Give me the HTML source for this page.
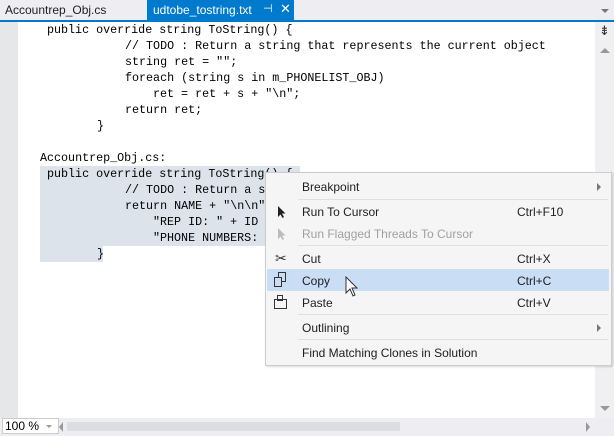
<!DOCTYPE html><html><head><style>
body{margin:0;width:614px;height:436px;overflow:hidden;background:#fff;position:relative;font-family:"Liberation Sans",sans-serif}
.a{position:absolute}
.c{position:absolute;font-family:"Liberation Mono",monospace;font-size:11.7px;color:#000;white-space:pre;line-height:16px}
.mi{position:absolute;left:302px;font-size:12px;color:#1e1e1e;line-height:14px}
.sc{position:absolute;left:517px;font-size:12px;color:#1e1e1e;line-height:14px}
.sep{position:absolute;left:298px;width:310px;height:1px;background:#e0e0e0}
</style></head><body>
<div class="a" style="left:0;top:0;width:614px;height:20px;background:#eeeef2"></div>
<div class="a" style="left:5px;top:3px;font-size:12px;color:#1e1e1e">Accountrep_Obj.cs</div>
<div class="a" style="left:147px;top:0;width:147px;height:21px;background:#007acc"></div>
<div class="a" style="left:153px;top:3px;font-size:12px;color:#fff">udtobe_tostring.txt</div>
<div class="a" style="left:263px;top:2px;font-size:11px;color:#fff">⊣</div>
<div class="a" style="left:280px;top:1px;font-size:13px;color:#fff">✕</div>
<div class="a" style="left:601px;top:9px;width:0;height:0;border-left:4px solid transparent;border-right:4px solid transparent;border-top:4px solid #777"></div>
<div class="a" style="left:0;top:20px;width:614px;height:2px;background:#007acc"></div>
<div class="a" style="left:0;top:22px;width:18px;height:396px;background:#e6e7e8"></div>
<div class="a" style="left:595px;top:22px;width:19px;height:396px;background:#f0f0f3"></div>
<div class="a" style="left:599px;top:23px;font-size:13px;color:#333">⇟</div>
<div class="a" style="left:600px;top:48px;border-left:5px solid transparent;border-right:5px solid transparent;border-bottom:5px solid #999"></div>
<div class="a" style="left:600px;top:406px;border-left:5px solid transparent;border-right:5px solid transparent;border-top:5px solid #999"></div>
<div class="a" style="left:40px;top:166px;width:260px;height:80px;background:#dde3ea"></div>
<div class="a" style="left:40px;top:246px;width:63px;height:16px;background:#dde3ea"></div>
<div class="c" style="left:47px;top:22px">public override string ToString() {</div>
<div class="c" style="left:125px;top:38px">// TODO : Return a string that represents the current object</div>
<div class="c" style="left:125px;top:54px">string ret = "";</div>
<div class="c" style="left:125px;top:70px">foreach (string s in m_PHONELIST_OBJ)</div>
<div class="c" style="left:153px;top:86px">ret = ret + s + "\n";</div>
<div class="c" style="left:125px;top:102px">return ret;</div>
<div class="c" style="left:97px;top:118px">}</div>
<div class="c" style="left:40px;top:150px">Accountrep_Obj.cs:</div>
<div class="c" style="left:47px;top:166px">public override string ToString() {</div>
<div class="c" style="left:125px;top:182px">// TODO : Return a st</div>
<div class="c" style="left:125px;top:198px">return NAME + "\n\n"</div>
<div class="c" style="left:153px;top:214px">"REP ID: " + ID +</div>
<div class="c" style="left:153px;top:230px">"PHONE NUMBERS:</div>
<div class="c" style="left:97px;top:246px">}</div>
<div class="a" style="left:0;top:418px;width:614px;height:18px;background:#eeeef2"></div>
<div class="a" style="left:2px;top:418px;width:57px;height:16px;background:#fff;border:1px solid #ccc;box-sizing:border-box"></div>
<div class="a" style="left:5px;top:419px;font-size:12px">100 %</div>
<div class="a" style="left:46px;top:425px;border-left:3px solid transparent;border-right:3px solid transparent;border-top:3px solid #999"></div>
<div class="a" style="left:59px;top:422px;border-top:5px solid transparent;border-bottom:5px solid transparent;border-right:4px solid #999"></div>
<div class="a" style="left:67px;top:422px;width:333px;height:9px;background:#dcdde2"></div>
<div class="a" style="left:586px;top:422px;border-top:5px solid transparent;border-bottom:5px solid transparent;border-left:4px solid #999"></div>
<div class="a" style="left:265px;top:172px;width:347px;height:194px;background:#f5f5f5;border:1px solid #ccc;box-sizing:border-box;box-shadow:1px 1px 2px rgba(0,0,0,.15)"></div>
<div class="a" style="left:267px;top:269px;width:342px;height:22px;background:#c9def5"></div>
<div class="mi" style="top:180px">Breakpoint</div>
<div class="a" style="left:597px;top:183px;border-top:4px solid transparent;border-bottom:4px solid transparent;border-left:4px solid #777"></div>
<div class="sep" style="top:199px"></div>
<svg class="a" style="left:277px;top:205px" width="10" height="14"><path d="M1 1 L1 12 L3.5 9.5 L5.5 13 L7 12 L5 8.5 L8.5 8.5 Z" fill="#222"/></svg>
<div class="mi" style="top:205px">Run To Cursor</div><div class="sc" style="top:205px">Ctrl+F10</div>
<svg class="a" style="left:277px;top:227px" width="10" height="14"><path d="M1 1 L1 12 L3.5 9.5 L5.5 13 L7 12 L5 8.5 L8.5 8.5 Z" fill="#bbb"/></svg>
<div class="mi" style="top:227px;color:#a0a0a0">Run Flagged Threads To Cursor</div>
<div class="sep" style="top:245px"></div>
<div class="a" style="left:275px;top:250px;font-size:14px;color:#333">✂</div>
<div class="mi" style="top:252px">Cut</div><div class="sc" style="top:252px">Ctrl+X</div>
<svg class="a" style="left:274px;top:272px" width="14" height="16"><rect x="4.5" y="0.5" width="7" height="9" fill="none" stroke="#333"/><rect x="0.5" y="5.5" width="7" height="9" fill="#c9def5" stroke="#333"/></svg>
<div class="mi" style="top:274px">Copy</div><div class="sc" style="top:274px">Ctrl+C</div>
<svg class="a" style="left:345px;top:276px" width="14" height="22"><path d="M1 1 L1 17 L5 13 L8 20 L10 19 L7 12 L12 12 Z" fill="#fff" stroke="#333"/></svg>
<svg class="a" style="left:274px;top:294px" width="14" height="16"><rect x="0.5" y="5.5" width="12" height="9" fill="none" stroke="#333"/><rect x="3.5" y="1.5" width="5" height="5" fill="none" stroke="#333"/></svg>
<div class="mi" style="top:296px">Paste</div><div class="sc" style="top:296px">Ctrl+V</div>
<div class="sep" style="top:314px"></div>
<div class="mi" style="top:321px">Outlining</div>
<div class="a" style="left:597px;top:324px;border-top:4px solid transparent;border-bottom:4px solid transparent;border-left:4px solid #777"></div>
<div class="sep" style="top:339px"></div>
<div class="mi" style="top:346px">Find Matching Clones in Solution</div>
</body></html>
